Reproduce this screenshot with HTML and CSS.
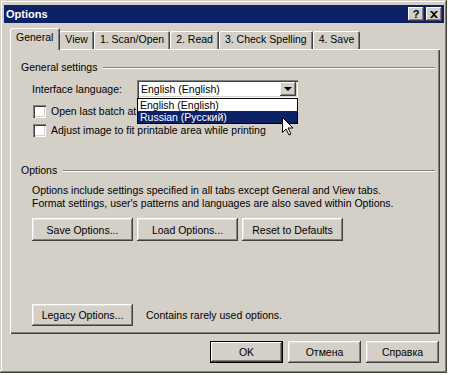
FILE: index.html
```html
<!DOCTYPE html>
<html lang="en">
<head>
    <meta charset="UTF-8">
    <title>Options</title>
    <link rel="stylesheet" href="styles.css">
</head>
<body>
<div class="window">
    <div class="titlebar">
        <span class="title">Options</span>
        <div class="caption-btns">
            <span class="cbtn help">?</span>
            <span class="cbtn">
                <svg width="8" height="7" viewBox="0 0 8 7"><path d="M0 0h2l2 2 2-2h2L5 3.5 8 7H6L4 5 2 7H0l3-3.5z" fill="#000"/></svg>
            </span>
        </div>
    </div>

    <div class="content">
        <div class="tabs">
            <span class="tab active">General</span>
            <span class="tab">View</span>
            <span class="tab">1. Scan/Open</span>
            <span class="tab">2. Read</span>
            <span class="tab">3. Check Spelling</span>
            <span class="tab">4. Save</span>
        </div>

        <div class="panel">
            <div class="group-head"><span>General settings</span><i class="groove"></i></div>

            <div class="lang-row">
                <span class="lang-label">Interface language:</span>
                <div class="combo">
                    <span class="combo-value">English (English)</span>
                    <span class="combo-arrow"><b class="tri"></b></span>
                    <div class="combo-list">
                        <div class="combo-item">English (English)</div>
                        <div class="combo-item selected">Russian (Русский)</div>
                    </div>
                    <svg class="cursor" width="12" height="19" viewBox="0 0 12 19"><path d="M0.5 0.5v15l3.5-3.5 3 6 2-1-3-6h5z" fill="#fff" stroke="#000" stroke-width="1"/></svg>
                </div>
            </div>

            <div class="check-row first"><span class="checkbox"></span>Open last batch at</div>
            <div class="check-row second"><span class="checkbox"></span>Adjust image to fit printable area while printing</div>

            <div class="group-head options-head"><span>Options</span><i class="groove"></i></div>
            <p class="note">Options include settings specified in all tabs except General and View tabs.<br>
                Format settings, user's patterns and languages are also saved within Options.</p>
            <div class="btn-row">
                <span class="btn wide">Save Options...</span>
                <span class="btn wide">Load Options...</span>
                <span class="btn wide">Reset to Defaults</span>
            </div>

            <div class="legacy-row">
                <span class="btn wide legacy">Legacy Options...</span>
                <span>Contains rarely used options.</span>
            </div>
        </div>

        <div class="footer">
            <span class="btn foot default">OK</span>
            <span class="btn foot">Отмена</span>
            <span class="btn foot">Справка</span>
        </div>
    </div>
</div>
</body>
</html>
```

FILE: styles.css
```css
*{
    margin: 0;
    padding: 0;
    box-sizing: border-box;
}
body{
    background: #fff;
    font-family: "Liberation Sans", Arial, sans-serif;
    font-size: 10.5px;
    color: #000;
}
.window{
    width: 447px;
    height: 373px;
    background: #d4d0c8;
    padding: 5px 3px 3px 4px;
    box-shadow: inset -1px -1px #404040, inset 1px 1px #d4d0c8, inset -2px -2px #808080, inset 2px 2px #fff;
}
.titlebar{
    height: 18px;
    background: #0c2166;
    display: flex;
    align-items: center;
    justify-content: space-between;
    padding-left: 2px;
}
.title{
    color: #fff;
    font-weight: bold;
    font-size: 11px;
}
.caption-btns{
    display: flex;
    gap: 2px;
    margin-right: 2px;
}
.cbtn{
    width: 16px;
    height: 14px;
    background: #d4d0c8;
    display: flex;
    align-items: center;
    justify-content: center;
    box-shadow: inset -1px -1px #404040, inset 1px 1px #fff, inset -2px -2px #808080;
}
.help{
    font-weight: bold;
    font-size: 11px;
    line-height: 1;
}
.content{
    padding: 5px 3px 0 6px;
}
.tabs{
    display: flex;
    align-items: flex-end;
    height: 21px;
    padding-left: 2px;
    position: relative;
    z-index: 1;
}
.tab{
    height: 18px;
    line-height: 17px;
    padding: 0 6px;
    background: #d4d0c8;
    box-shadow: inset 1px 1px #fff, inset -1px 0 #404040, inset -2px 0 #808080;
    border-radius: 2px 2px 0 0;
}
.tab.active{
    height: 22px;
    line-height: 19px;
    margin: 0 -1px -1px -2px;
    padding: 0 7px 0 6px;
    position: relative;
}
.panel{
    height: 285px;
    width: 430px;
    display: flex;
    flex-direction: column;
    padding: 12px 5px 8px 11px;
    box-shadow: inset 1px 1px #fff, inset -1px -1px #404040, inset -2px -2px #808080;
}
.group-head{
    display: flex;
    align-items: center;
    line-height: 13px;
    gap: 6px;
}
.groove{
    flex: 1;
    height: 2px;
    border-top: 1px solid #808080;
    border-bottom: 1px solid #fff;
}
.lang-row{
    display: flex;
    align-items: center;
    margin: 6px 0 0 11px;
    position: relative;
    z-index: 2;
}
.lang-label{
    width: 105px;
}
.combo{
    position: relative;
    width: 161px;
    height: 18px;
    background: #fff;
    box-shadow: inset 1px 1px #808080, inset 2px 2px #404040, inset -1px -1px #fff, inset -2px -2px #d4d0c8;
    display: flex;
    align-items: center;
    padding: 0 2px 0 4px;
}
.combo-value{
    flex: 1;
}
.combo-arrow{
    width: 16px;
    height: 14px;
    background: #d4d0c8;
    display: flex;
    align-items: center;
    justify-content: center;
    box-shadow: inset -1px -1px #404040, inset 1px 1px #fff, inset -2px -2px #808080;
}
.tri{
    width: 0;
    height: 0;
    border-left: 4px solid transparent;
    border-right: 4px solid transparent;
    border-top: 4px solid #000;
}
.combo-list{
    position: absolute;
    top: 18px;
    left: 0;
    width: 161px;
    background: #fff;
    border: 1px solid #000;
}
.combo-item{
    height: 12px;
    line-height: 12px;
    padding-left: 2px;
}
.combo-item.selected{
    background: #0c2166;
    color: #fff;
}
.cursor{
    position: absolute;
    left: 145px;
    top: 37px;
}
.check-row{
    display: flex;
    align-items: center;
    gap: 5px;
    height: 13px;
    line-height: 11px;
    margin: 6px 0 0 12px;
}
.check-row.first{
    margin-top: 7px;
}
.checkbox{
    width: 13px;
    height: 13px;
    background: #fff;
    box-shadow: inset 1px 1px #808080, inset 2px 2px #404040, inset -1px -1px #fff, inset -2px -2px #d4d0c8;
}
.options-head{
    margin-top: 27px;
}
.note{
    line-height: 13px;
    margin: 7px 0 0 11px;
}
.btn-row{
    display: flex;
    gap: 4px;
    margin: 8px 0 0 11px;
}
.btn{
    display: flex;
    align-items: center;
    justify-content: center;
    background: #d4d0c8;
    box-shadow: inset -1px -1px #404040, inset 1px 1px #fff, inset -2px -2px #808080, inset 2px 2px #e4e2de;
}
.wide{
    width: 101px;
    height: 23px;
}
.legacy-row{
    margin: auto 0 0 11px;
    display: flex;
    align-items: center;
    gap: 13px;
}
.legacy{
    height: 22px;
}
.footer{
    display: flex;
    justify-content: flex-end;
    gap: 5px;
    margin-top: 7px;
    padding-right: 1px;
    width: 430px;
}
.foot{
    width: 73px;
    height: 22px;
}
.default{
    box-shadow: inset 0 0 0 1px #000, inset -2px -2px #404040, inset 2px 2px #fff, inset -3px -3px #808080;
}
```
